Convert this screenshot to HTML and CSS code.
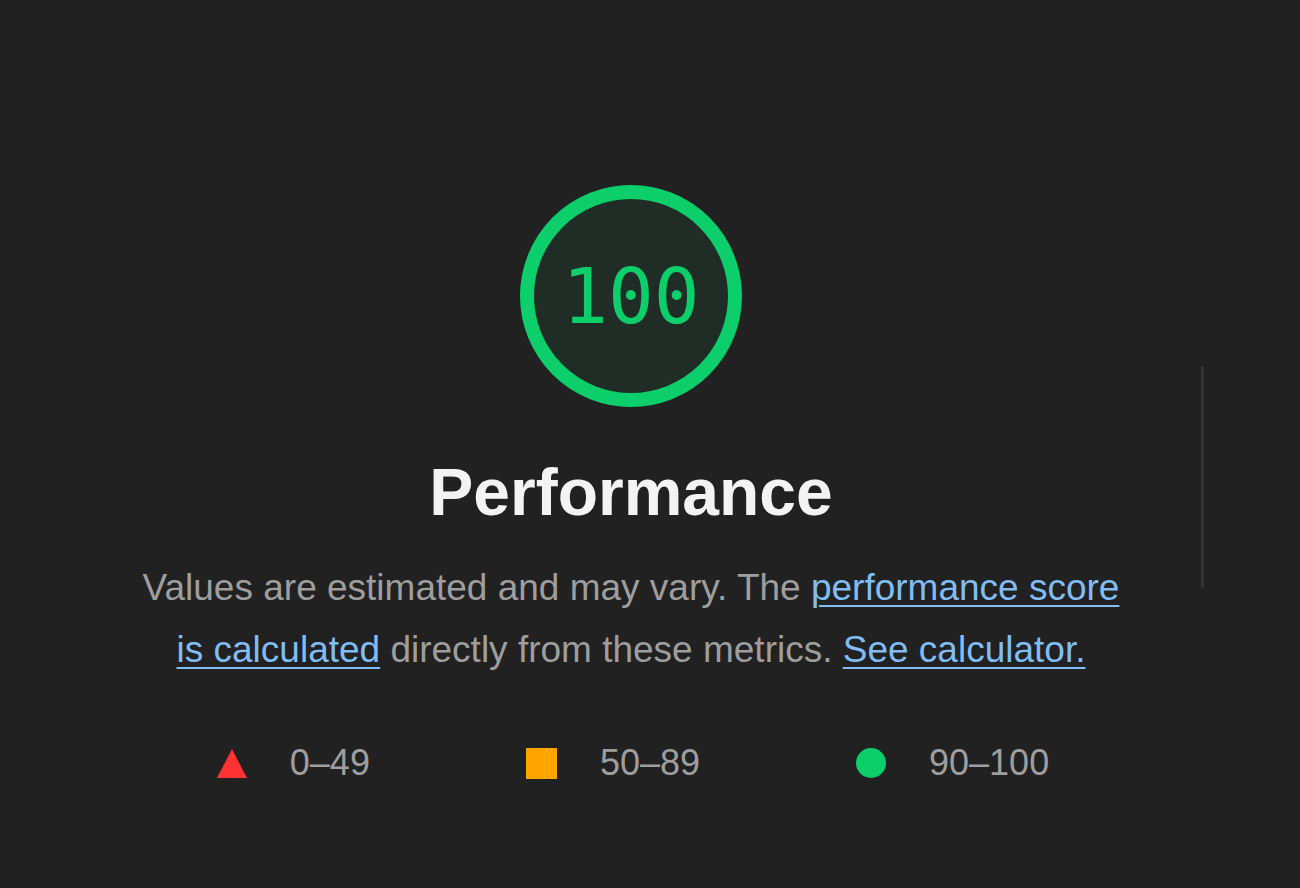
FILE: index.html
```html
<!DOCTYPE html>
<html>
<head>
<meta charset="utf-8">
<link rel="stylesheet" href="styles.css">
</head>
<body>
<div class="page">
  <main class="category">
    <div class="gauge">
      <svg class="gauge-svg" viewBox="0 0 222 222" width="222" height="222">
        <circle cx="111" cy="111" r="104" class="gauge-fill"></circle>
        <circle cx="111" cy="111" r="104" class="gauge-arc"></circle>
      </svg>
      <div class="gauge-value">100</div>
    </div>
    <h1 class="title">Performance</h1>
    <p class="desc">Values are estimated and may vary. The <a href="#">performance score is calculated</a> directly from these metrics. <a href="#">See calculator.</a></p>
    <div class="legend">
      <div class="legend-item">
        <svg class="icon" width="30" height="29" viewBox="0 0 30 29"><polygon points="15,0 30,29 0,29" fill="#ff3333"></polygon></svg>
        <span>0–49</span>
      </div>
      <div class="legend-item">
        <svg class="icon" width="31" height="31" viewBox="0 0 31 31"><rect x="0" y="0" width="31" height="31" fill="#ffa400"></rect></svg>
        <span>50–89</span>
      </div>
      <div class="legend-item">
        <svg class="icon" width="30" height="30" viewBox="0 0 30 30"><circle cx="15" cy="15" r="15" fill="#0cce6b"></circle></svg>
        <span>90–100</span>
      </div>
    </div>
  </main>
  <div class="divider"></div>
</div>
</body>
</html>
```
FILE: styles.css
```css
html, body {
  margin: 0;
  padding: 0;
  background: #212121;
}
body {
  width: 1300px;
  height: 888px;
  overflow: hidden;
  font-family: "Liberation Sans", Arial, sans-serif;
}
.page {
  position: relative;
  height: 888px;
}
.category {
  width: 1262px;
  display: flex;
  flex-direction: column;
  align-items: center;
  padding-top: 185px;
}
.gauge {
  position: relative;
  width: 222px;
  height: 222px;
}
.gauge-svg {
  display: block;
}
.gauge-fill {
  fill: rgba(12, 206, 107, 0.07);
  stroke: none;
}
.gauge-arc {
  fill: none;
  stroke: #0cce6b;
  stroke-width: 14;
}
.gauge-value {
  position: absolute;
  inset: 0;
  display: flex;
  align-items: center;
  justify-content: center;
  font-family: "DejaVu Sans Mono", "Liberation Mono", monospace;
  font-size: 76px;
  color: #0cce6b;
}
.title {
  margin: 45px 0 0;
  font-size: 66px;
  line-height: 80px;
  font-weight: bold;
  color: #f3f3f3;
}
.desc {
  margin: 25px 0 0;
  width: 990px;
  text-align: center;
  font-size: 37px;
  line-height: 62px;
  color: #9e9e9e;
}
.desc a {
  color: #80bdf5;
  text-decoration: underline;
  text-decoration-thickness: 2px;
  text-underline-offset: 5px;
}
.legend {
  margin-top: 62px;
  display: flex;
  justify-content: center;
  gap: 156px;
  padding-left: 4px;
}
.legend-item {
  display: flex;
  align-items: center;
  gap: 43px;
  font-size: 36px;
  line-height: 40px;
  color: #9e9e9e;
}
.icon {
  display: block;
}
.divider {
  position: absolute;
  left: 1201px;
  top: 366px;
  width: 3px;
  height: 222px;
  background: #333333;
}
```
